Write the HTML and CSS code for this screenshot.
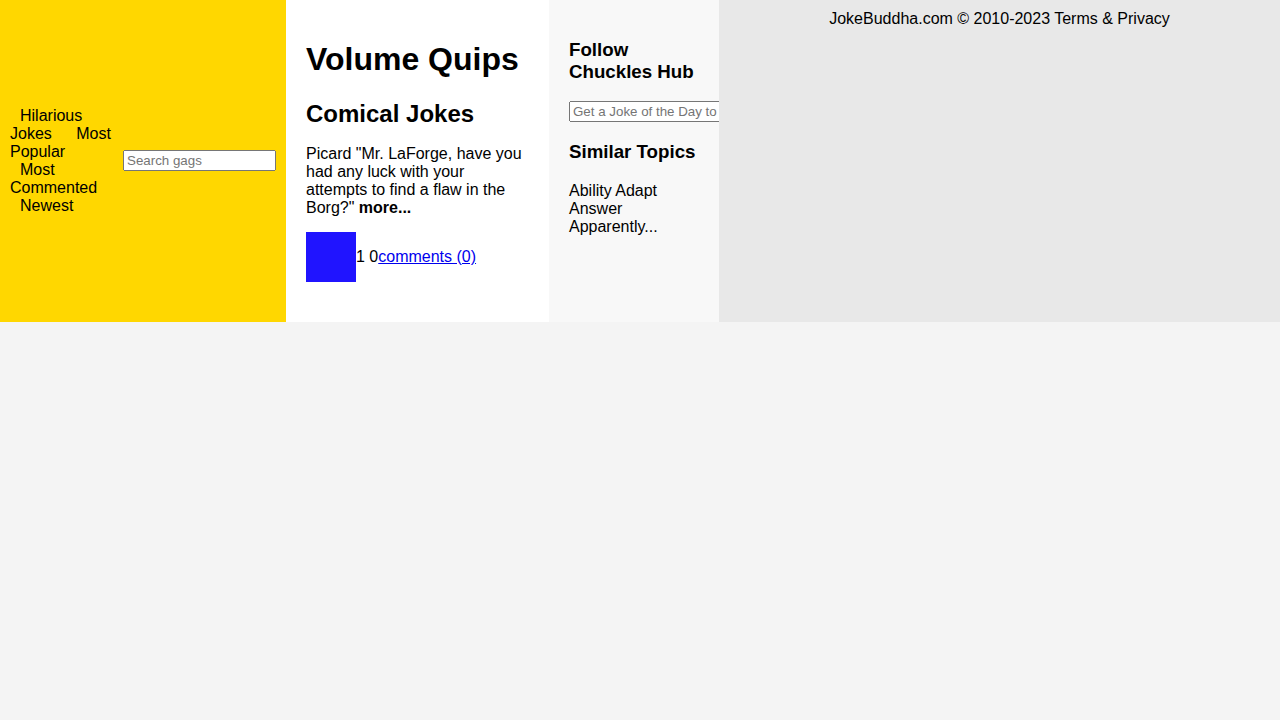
FILE: index.html
```html
<!DOCTYPE html>
<html lang="en">
<head>
<meta charset="utf-8">
<title>Volume Quips</title>
<link rel="stylesheet" href="styles.css">
</head>
<body>
<div class="page">
  <header class="site-header">
    <nav class="nav">
      <a href="#" class="nav-link">Hilarious Jokes</a>
      <a href="#" class="nav-link">Most Popular</a>
      <a href="#" class="nav-link">Most Commented</a>
      <a href="#" class="nav-link">Newest</a>
    </nav>
    <input type="text" class="search" placeholder="Search gags">
  </header>
  <main class="main">
    <h1 class="title">Volume Quips</h1>
    <h2 class="subtitle">Comical Jokes</h2>
    <p class="joke-text">Picard "Mr. LaForge, have you had any luck with your attempts to find a flaw in the Borg?" <strong>more...</strong></p>
    <div class="meta">
      <span class="thumb"></span>
      <span class="votes">1 0</span><a href="#" class="comments">comments (0)</a>
    </div>
  </main>
  <aside class="sidebar">
    <h3 class="side-title">Follow Chuckles Hub</h3>
    <input type="text" class="subscribe" placeholder="Get a Joke of the Day to your inbox">
    <h3 class="side-title">Similar Topics</h3>
    <p class="topics">Ability Adapt Answer Apparently...</p>
  </aside>
  <footer class="site-footer">JokeBuddha.com © 2010-2023 Terms &amp; Privacy</footer>
</div>
</body>
</html>
```
FILE: styles.css
```css
html, body {
  margin: 0;
  padding: 0;
}
body {
  background: #f4f4f4;
  font-family: "Liberation Sans", Arial, sans-serif;
  font-size: 16px;
  color: #000;
}
.page {
  display: flex;
  align-items: stretch;
}
.site-header {
  box-sizing: border-box;
  width: 286px;
  flex: 0 0 286px;
  padding: 10px;
  background: #ffd700;
  display: flex;
  align-items: center;
}
.nav {
  flex: 1 1 auto;
  min-width: 0;
}
.nav-link {
  color: #000;
  text-decoration: none;
  margin: 0 10px;
}
.search, .subscribe {
  font-family: "Liberation Sans", Arial, sans-serif;
  font-size: 13.333px;
  box-sizing: border-box;
  width: 153px;
  flex: 0 0 153px;
  margin: 0;
}
.main {
  box-sizing: border-box;
  flex: 0 0 263px;
  width: 263px;
  padding: 20px;
  background: #fff;
}
.title {
  font-size: 32px;
  margin: 21.44px 0;
}
.subtitle {
  font-size: 24px;
  margin: 21.44px 0 17px;
}
.joke-text {
  margin: 0 0 15px;
}
.meta {
  display: flex;
  align-items: center;
  margin: 15px 0 20px;
}
.thumb {
  width: 50px;
  height: 50px;
  background: #2014ff;
  display: block;
}
.comments {
  color: #0000ee;
}
.sidebar {
  box-sizing: border-box;
  flex: 0 0 170px;
  width: 170px;
  padding: 20px;
  background: #f8f8f8;
}
.side-title {
  font-size: 18.72px;
  margin: 18.72px 0;
}
.subscribe {
  display: block;
}
.topics {
  margin: 16px 0;
}
.site-footer {
  flex: 1 1 auto;
  background: #e8e8e8;
  text-align: center;
  padding: 10px 0;
}
```
